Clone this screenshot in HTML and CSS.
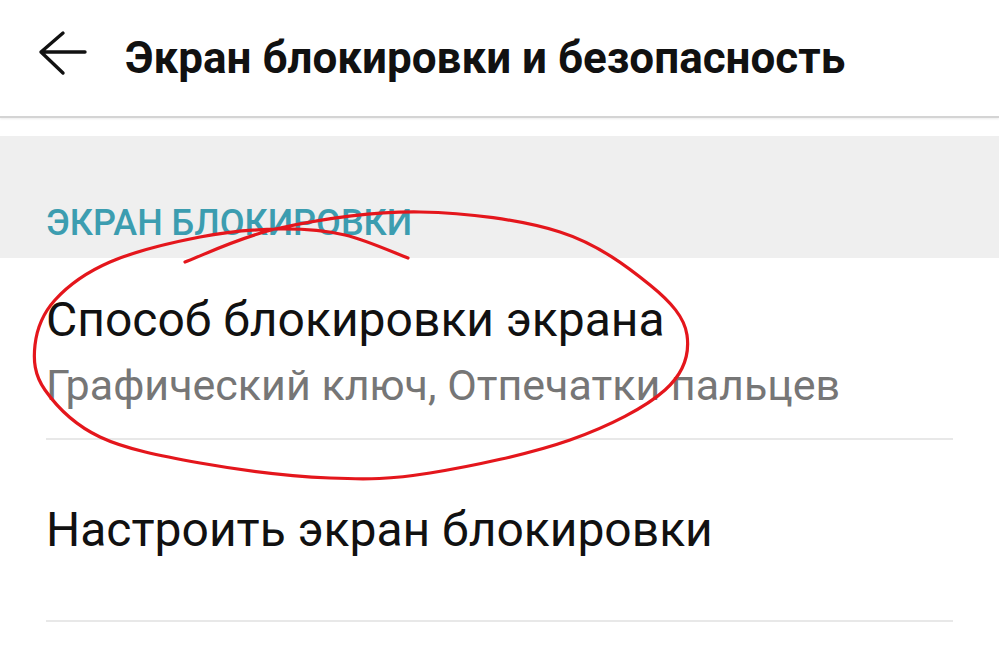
FILE: index.html
```html
<!DOCTYPE html>
<html lang="ru">
<head>
    <meta charset="UTF-8">
    <meta name="viewport" content="width=device-width, initial-scale=1.0">
    <title>Экран блокировки и безопасность</title>
    <link rel="stylesheet" href="styles.css">
</head>
<body>
    <header class="appbar">
        <svg class="back" width="50" height="46" viewBox="0 0 50 46">
            <path d="M3 22H47M3 22L25 3M3 22L25 43" fill="none" stroke="#111" stroke-width="3.4" stroke-linecap="round" stroke-linejoin="round"/>
        </svg>
        <h1 class="title">Экран блокировки и безопасность</h1>
    </header>

    <div class="category">
        <span class="category-label">ЭКРАН БЛОКИРОВКИ</span>
    </div>

    <ul class="list">
        <li class="item item-two">
            <span class="item-title">Способ блокировки экрана</span>
            <span class="item-sub">Графический ключ, Отпечатки пальцев</span>
        </li>
        <li class="item item-one">
            <span class="item-title">Настроить экран блокировки</span>
        </li>
    </ul>

    <svg class="mark" width="999" height="645" viewBox="0 0 999 645">
        <path d="M185 262C200.8 256.3 240.8 236.3 280 228C319.2 219.7 373.3 211.3 420 212C466.7 212.7 521.7 219.8 560 232C598.3 244.2 628.8 267.8 650 285C671.2 302.2 684.5 317.5 687 335C689.5 352.5 684.5 372.5 665 390C645.5 407.5 609.2 426.2 570 440C530.8 453.8 470 466.7 430 473C390 479.3 368.3 479.7 330 478C291.7 476.3 238.3 469.8 200 463C161.7 456.2 125.8 449.2 100 437C74.2 424.8 55.8 405.3 45 390C34.2 374.7 33.3 360 35 345C36.7 330 42.5 313.8 55 300C67.5 286.2 85.8 272.5 110 262C134.2 251.5 171.7 242.5 200 237C228.3 231.5 255.8 229.3 280 229C304.2 228.7 323.7 230.2 345 235C366.3 240 397.5 254.2 408 258" fill="none" stroke="#e4161c" stroke-width="3.2" stroke-linecap="round" stroke-linejoin="round"/>
    </svg>
</body>
</html>
```

FILE: styles.css
```css
body {
    margin: 0;
    font-family: Roboto, "Noto Sans", sans-serif;
    background-color: #fff;
    color: #111;
}
.appbar {
    height: 116px;
    display: flex;
    align-items: center;
    padding-left: 38px;
    border-bottom: 2px solid #d4d4d4;
    box-shadow: 0 1px 2px rgba(0, 0, 0, 0.08);
}
.back {
    margin-bottom: 10px;
}
.title {
    margin: 0 0 0 37px;
    font-size: 44px;
    font-weight: 700;
    line-height: 1;
    color: #111;
}
.category {
    margin-top: 18px;
    height: 122px;
    background-color: #efefef;
    display: flex;
    align-items: flex-end;
    padding: 0 46px 17px;
    box-sizing: border-box;
}
.category-label {
    font-size: 36px;
    font-weight: 500;
    line-height: 1;
    color: #3c9db0;
}
.list {
    list-style: none;
    margin: 0 46px;
    padding: 0;
}
.item {
    display: flex;
    flex-direction: column;
    border-bottom: 2px solid #e8e8e8;
}
.item-two {
    padding: 38px 0 31px;
    gap: 20px;
}
.item-one {
    padding: 66px 0;
}
.item-title {
    font-size: 48px;
    line-height: 1;
    color: #111;
}
.item-sub {
    font-size: 43px;
    line-height: 1;
    color: #767676;
}
.mark {
    position: absolute;
    top: 0;
    left: 0;
    pointer-events: none;
}
```
